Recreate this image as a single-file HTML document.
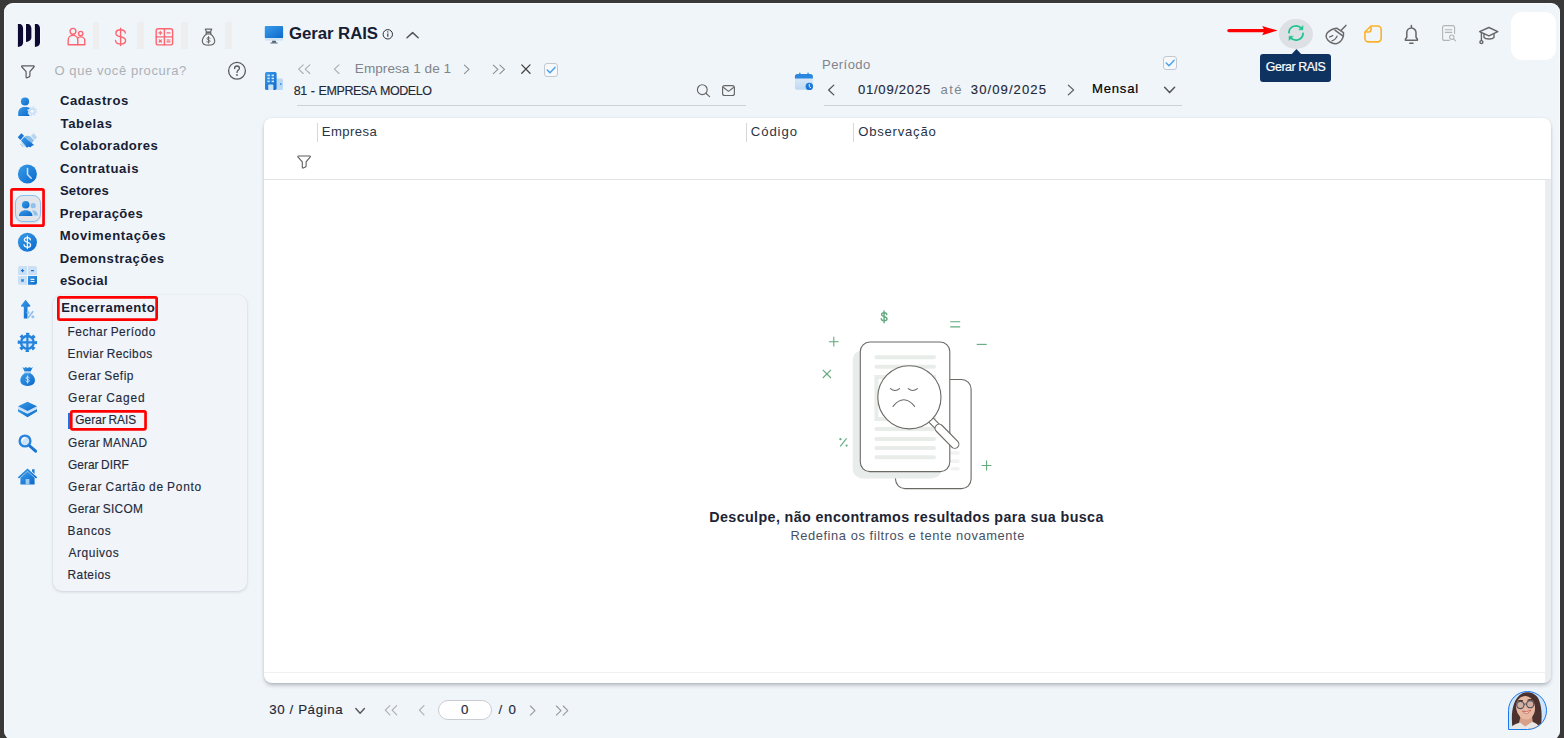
<!DOCTYPE html>
<html lang="pt-BR"><head><meta charset="utf-8"><title>Gerar RAIS</title>
<style>
*{box-sizing:border-box;margin:0;padding:0}
html,body{width:1564px;height:738px;overflow:hidden;background:#393939}
body{font-family:"Liberation Sans",sans-serif;position:relative}
#app{position:absolute;left:0;top:0;width:1564px;height:738px;overflow:hidden}
#win{position:absolute;left:4px;top:3px;width:1556px;height:737px;background:#f0f5fa;border-radius:9px;box-shadow:inset 0 0 0 1px rgba(255,255,255,.55)}
.t{position:absolute;white-space:pre;line-height:20px;height:20px;font-family:"Liberation Sans",sans-serif}
.abs{position:absolute}
svg{position:absolute;left:0;top:0;overflow:visible}
.sep{position:absolute;top:22px;height:27px;background:#eeeeee}
#panel{position:absolute;left:53px;top:294.5px;width:193.5px;height:296px;border-radius:9px;background:#f1f5fa;box-shadow:0 1px 3px rgba(60,80,110,.20),0 0 1px rgba(60,80,110,.08)}
#card{overflow:hidden;position:absolute;left:264px;top:118px;width:1287px;height:565px;background:#fff;border-radius:8px;box-shadow:0 3px 4px -1px rgba(30,35,45,.30),0 0 3px rgba(50,60,80,.10)}
.hl{position:absolute;height:1px;background:#cdd2d8}
.vsep{position:absolute;top:123px;height:19px;width:1px;background:#d4d7db}
.cb{position:absolute;width:14px;height:14px;border:1px solid #c3c8ce;border-radius:3px;background:#f6f8fb}

</style></head>
<body>
<div id="app">
<div id="win"></div>
<!-- top module separators -->
<div class="sep" style="left:93px;width:6px"></div>
<div class="sep" style="left:137px;width:7px"></div>
<div class="sep" style="left:181px;width:7px"></div>
<div class="sep" style="left:225px;width:7px"></div>
<div id="panel"></div>
<!-- selected module tile -->
<div class="abs" style="left:15px;top:194.5px;width:26px;height:27px;border-radius:8px;background:#e2e6ea;border:1px solid #8bc0ef;box-shadow:0 1px 2px rgba(0,0,0,.12)"></div>
<!-- card -->
<div id="card">
  <div class="abs" style="left:0;top:61px;width:1287px;height:1px;background:#e2e3e5"></div>
  <div class="abs" style="left:1281px;top:62px;width:6px;height:503px;background:#ecedf1"></div>
  <div class="abs" style="left:0;top:554px;width:1281px;height:1px;background:#f0f0f2"></div>
</div>
<div class="vsep" style="left:317px"></div>
<div class="vsep" style="left:746px"></div>
<div class="vsep" style="left:853px"></div>
<!-- underlines -->
<div class="hl" style="left:297px;top:105px;width:449px"></div>
<div class="hl" style="left:824px;top:105px;width:358px"></div>
<!-- checkboxes -->
<div class="cb" style="left:544px;top:63px"></div>
<div class="cb" style="left:1163px;top:56px"></div>
<!-- right white tile -->
<div class="abs" style="left:1511px;top:12px;width:45px;height:48px;border-radius:11px;background:#fff"></div>
<!-- toolbar hover circle -->
<div class="abs" style="left:1278.8px;top:18.8px;width:34.2px;height:30.2px;border-radius:50%;background:#dde1e6"></div>
<!-- tooltip -->
<div class="abs" style="left:1260px;top:54px;width:71px;height:28px;border-radius:3px;background:#0e3361"></div>
<!-- pagination input -->
<div class="abs" style="left:438px;top:700px;width:54px;height:20px;border-radius:10px;background:#fff;border:1px solid #c9cdd3"></div>
<!-- sub menu active bar -->
<div class="abs" style="left:68px;top:413px;width:2.2px;height:16px;background:#1a73e8"></div>
<!-- avatar -->
<div class="abs" id="avatar" style="left:1508px;top:691px;width:39px;height:39px;border-radius:50% 50% 50% 0;background:#cde6fd;border:1.5px solid #1a78ee;overflow:hidden">
<svg width="39" height="39" viewBox="0 0 39 39" style="left:-1.5px;top:-1.5px">
 <path d="M4.6 38 C2.8 25 3.6 8 14 2.4 C20 -0.2 28 1.8 31 9 C34 16 34 26 33.2 33 L27 38 Z" fill="#4c322e"/>
 <path d="M12.4 26 L24 25 L25 33 L17 37 L11 32 Z" fill="#d6a089"/>
 <ellipse cx="17.6" cy="16.6" rx="9.4" ry="12" transform="rotate(-8 17.6 16.6)" fill="#e6b8a2"/>
 <path d="M6.6 15 C7 6.5 15 2.6 21.6 3.8 C26.4 4.8 28.6 8.4 29.2 14 C27 8 22.4 4.8 17.4 5 C12.4 5.4 8.6 8.4 6.6 15 Z" fill="#4c322e"/>
 <path d="M26.6 7.4 C31 13 30.6 26 33.2 33 L28.6 35.6 C27.6 27 28.8 16 26.6 7.4 Z" fill="#4c322e"/>
 <path d="M6.8 13 C5.4 20 6.6 30 4.6 38 L9 36 C9.6 28 7.2 20 6.8 13 Z" fill="#4c322e"/>
 <path d="M1.4 39 C3.4 34.4 8 32.6 12 31.4 L17.2 35.6 L24.4 30.8 C27.6 31.8 29.8 33.6 31 35.6 L26 39 Z" fill="#e9e7e4"/>
 <circle cx="12.4" cy="14" r="3.6" fill="rgba(130,140,160,.18)" stroke="#4b505b" stroke-width="1.1"/>
 <circle cx="22.2" cy="13.2" r="3.6" fill="rgba(130,140,160,.18)" stroke="#4b505b" stroke-width="1.1"/>
 <path d="M16 13.4 Q17.4 12.6 18.6 13.2" fill="none" stroke="#4b505b" stroke-width="1"/>
 <path d="M9.4 10.2 Q12 8.8 15 9.8 M19.4 9.2 Q22.4 7.8 25.2 9" fill="none" stroke="#3a2622" stroke-width="1"/>
 <path d="M14.4 20.2 Q18.6 21.6 22.8 19.2 Q19.4 25 14.4 20.2 Z" fill="#fff" stroke="#c4544f" stroke-width=".8"/>
</svg>
</div>
<svg id="ico" width="1564" height="738" viewBox="0 0 1564 738">
<defs>
 <linearGradient id="gb" x1="0" y1="0" x2="1" y2="1"><stop offset="0" stop-color="#3a9ce8"/><stop offset="1" stop-color="#0b69cc"/></linearGradient>
 <linearGradient id="gl" x1="0" y1="0" x2="0" y2="1"><stop offset="0" stop-color="#e3eef9"/><stop offset="1" stop-color="#bfd8f2"/></linearGradient>
</defs>
<!-- logo -->
<g fill="#0c0a33" stroke="#fbfdff" stroke-width="1" paint-order="stroke">
 <path d="M17.9 23.9 H20.4 C22.2 24.6 23.1 26.4 23.1 28.6 V42.4 C23.1 45 21 46.6 17.9 47 Z"/>
 <path d="M26 23.9 H28.6 C30.4 24.6 31.4 26.4 31.4 28.6 V37.6 C31.4 40.2 29.2 41.7 26 42 Z"/>
 <path d="M34.9 23.9 H37.3 C39.1 24.6 40 26.4 40 28.6 V42.4 C40 45 38 46.6 34.9 47 Z"/>
</g>
<!-- top modules -->
<g fill="none" stroke="#fb6570" stroke-width="1.4" stroke-linejoin="round" stroke-linecap="round">
 <circle cx="73" cy="31.3" r="2.9"/>
 <path d="M68.2 44.7 V40.2 C68.2 37.4 70.3 35.3 73 35.3 C75.7 35.3 77.8 37.4 77.8 40.2 V44.7 Z"/>
 <circle cx="80.7" cy="33.6" r="2.2"/>
 <path d="M77.8 44.7 H84.8 V40.6 C84.8 38.5 83 36.9 80.7 36.9 C79.4 36.9 78.4 37.4 77.6 38.2"/>
 <!-- calc -->
 <rect x="156.2" y="28.8" width="16.4" height="16.1" rx="2"/>
 <path d="M164.4 28.8 V44.9 M156.2 36.9 H172.6"/>
 <path d="M160.3 31.4 V34.4 M158.8 32.9 H161.8 M167 32.9 H170 M159.2 39.8 L161.4 42 M161.4 39.8 L159.2 42 M167 40 H170 M167 41.9 H170" stroke-width="1.2"/>
</g>
<g fill="none" stroke="#fb6570" stroke-width="1.4" stroke-linecap="round">
 <path d="M125.3 33 C125 30.8 123.2 29.8 120.6 29.8 C117.8 29.8 115.9 31.1 115.9 33.2 C115.9 35.3 117.6 36.2 120.6 36.8 C123.8 37.5 125.6 38.4 125.6 40.6 C125.6 42.8 123.5 44.1 120.7 44.1 C117.8 44.1 115.8 42.9 115.5 40.5 M120.6 28.2 V45.6"/>
</g>
<!-- money bag gray -->
<g fill="none" stroke="#6a6a6a" stroke-width="1.2" stroke-linejoin="round" stroke-linecap="round">
 <path d="M205.3 29.2 H211.7 L210.3 32.2 H206.7 Z"/>
 <path d="M206.2 32.4 H210.8 V33.9 H206.2 Z"/>
 <path d="M206.5 34 C204 36 202.3 38.8 202.3 41.2 C202.3 43.9 204.6 45.2 208.5 45.2 C212.4 45.2 214.7 43.9 214.7 41.2 C214.7 38.8 213 36 210.5 34"/>
 <path d="M209.9 38.4 C209.7 37.7 209.2 37.4 208.5 37.4 C207.6 37.4 207 37.9 207 38.6 C207 40.2 210 39.4 210 41.1 C210 41.9 209.4 42.4 208.5 42.4 C207.7 42.4 207.1 42 206.9 41.3 M208.5 36.6 V43.2" stroke-width="1"/>
</g>
<!-- sidebar filter + help -->
<path d="M22.3 65.8 H33.5 Q34.7 66.0 33.9 67.0 L29.9 71.7 V75.7 Q29.8 76.5 29.1 76.9 L27.1 77.8 Q26.1 78.1 26.1 77.1 V71.7 L21.9 67.0 Q21.1 66.0 22.3 65.8 Z" fill="none" stroke="#5c5c5c" stroke-width="1.2" stroke-linejoin="round"/>
<circle cx="237" cy="70.8" r="8.4" fill="none" stroke="#5a5a5a" stroke-width="1.3"/>
<path d="M234.6 68.5 C234.6 66.9 235.6 66 237 66 C238.4 66 239.4 66.9 239.4 68.2 C239.4 70 237 70.2 237 72.4" fill="none" stroke="#5a5a5a" stroke-width="1.3" stroke-linecap="round"/>
<circle cx="237" cy="75" r=".9" fill="#5a5a5a"/>
<!-- left column icons -->
<!-- 1 person gear -->
<circle cx="25" cy="101.5" r="4.1" fill="url(#gb)"/>
<path d="M18.2 116 V113.2 C18.2 109.6 20.6 106.9 24.2 106.9 H26 C27.6 106.9 28.9 107.4 29.9 108.3 C28 109.8 27.6 113.2 29.9 116 Z" fill="url(#gb)"/>
<g fill="#cbe0f5"><circle cx="32.2" cy="111.2" r="3.4"/><circle cx="32.2" cy="111.2" r="4.1" fill="none" stroke="#cbe0f5" stroke-width="1.7" stroke-dasharray="1.61 1.61"/></g>
<circle cx="32.2" cy="111.2" r="1.5" fill="#f4f8fc"/>
<!-- 2 handshake -->
<path d="M17.8 137.3 L21.3 133.2 L24 135.8 L20.4 140 Z" fill="#1a74d2"/>
<path d="M37.1 137.3 L33.7 133.2 L31 135.8 L34.6 140 Z" fill="#b9d6f1"/>
<path d="M24.6 136.4 C26.6 135.4 28.8 135.6 30.4 136.6 L34 140.6 L31.6 143.2 L27.4 139.2 L24.4 140.6 Z" fill="#8bbcea"/>
<path d="M21 140.6 L24.2 137 L33.6 144.4 C33.8 145.4 33 146 32.2 145.6 L30.8 147 C30 147.6 29.2 147.2 28.8 146.6 L27.6 147.4 C26.6 147.6 26 147 25.8 146.4 Z" fill="url(#gb)"/>
<path d="M21.6 142.2 L25.4 146.4 M20.4 143.8 L23.4 146.8" stroke="#a9cdf0" stroke-width="1.1"/>
<!-- 3 clock -->
<circle cx="27.4" cy="174" r="9.5" fill="url(#gb)"/>
<path d="M27.5 168.6 V174.4 L31.2 178.2" fill="none" stroke="#cfe5fa" stroke-width="1.5" stroke-linecap="round" stroke-linejoin="round"/>
<!-- 4 selected people -->
<circle cx="25.7" cy="204.8" r="3.8" fill="url(#gb)"/>
<path d="M18.9 216 C18.9 212.6 21.6 210.3 25.7 210.3 C29.8 210.3 32.5 212.6 32.5 216 Z" fill="url(#gb)"/>
<circle cx="33.2" cy="205.7" r="2.6" fill="#8fc2ee"/>
<path d="M31.6 210.6 C35.4 210 37.9 212 37.9 215.4 H34 C33.8 213.4 33 211.8 31.6 210.6 Z" fill="#8fc2ee"/>
<rect x="11.45" y="189.45" width="32.1" height="36.2" rx="1.5" fill="none" stroke="#ff0000" stroke-width="2.7"/>
<!-- 5 dollar -->
<circle cx="27.4" cy="242.3" r="9.5" fill="url(#gb)"/>
<path d="M30.4 239.8 C30.2 238.3 29 237.5 27.3 237.5 C25.5 237.5 24.3 238.4 24.3 239.8 C24.3 243.2 30.6 241.3 30.6 244.9 C30.6 246.3 29.3 247.2 27.4 247.2 C25.5 247.2 24.2 246.3 24 244.7 M27.4 236.2 V248.5" fill="none" stroke="#f2f8fe" stroke-width="1.25" stroke-linecap="round"/>
<!-- 6 calc -->
<path d="M20 266.1 H27 V275 H18 V268.1 A2 2 0 0 1 20 266.1 Z" fill="#cbe0f5"/>
<path d="M28 266.1 H35 A2 2 0 0 1 37 268.1 V275 H28 Z" fill="#cbe0f5"/>
<path d="M18 276 H27 V284.8 H20 A2 2 0 0 1 18 282.8 Z" fill="#cbe0f5"/>
<path d="M28 276 H37 V282.8 A2 2 0 0 1 35 284.8 H28 Z" fill="url(#gb)"/>
<path d="M22.5 269 V272.2 M20.9 270.6 H24.1 M31 270.6 H34 M21.4 279.3 L23.6 281.5 M23.6 279.3 L21.4 281.5" stroke="#1a73d6" stroke-width="1.1" fill="none"/>
<path d="M30.6 279.4 H34.4 M30.6 281.5 H34.4" stroke="#e8f2fc" stroke-width="1.1"/>
<!-- 7 arrow up % -->
<path d="M25.6 299.7 L30.2 305.6 C30.5 306.3 30.2 306.8 29.5 306.8 H27.5 V318.4 H23.8 V306.8 H21.8 C21.1 306.8 20.8 306.3 21.1 305.6 Z" fill="url(#gb)"/>
<path d="M27.6 318.2 L33.2 311.2" stroke="#8fc2ee" stroke-width="1.7"/>
<circle cx="28" cy="312.6" r="1.5" fill="#8fc2ee"/><circle cx="32.8" cy="316.8" r="1.5" fill="#8fc2ee"/>
<!-- 8 gear plus -->
<circle cx="27.4" cy="342.4" r="6.4" fill="#d3e6f8" stroke="#2583dc" stroke-width="2.4"/>
<circle cx="27.4" cy="342.4" r="8.4" fill="none" stroke="#2583dc" stroke-width="2.6" stroke-dasharray="3.3 3.3" stroke-dashoffset="1.65"/>
<path d="M27.4 336 V348.8 M21 342.4 H33.8" stroke="#2583dc" stroke-width="2.2"/>
<!-- 9 money bag -->
<path d="M22.3 367 L24.2 368 L25.8 367 L27.6 368 L29.4 367 L31 368 L32.9 367 L30.6 371.4 H24.6 Z" fill="url(#gb)"/>
<rect x="24.4" y="371.4" width="6.4" height="1.8" fill="#a9cdf0"/>
<path d="M24.6 373.2 H30.6 C33.4 375 34.9 377.6 34.9 380.2 C34.9 383.8 32 385.9 27.6 385.9 C23.2 385.9 20.3 383.8 20.3 380.2 C20.3 377.6 21.8 375 24.6 373.2 Z" fill="url(#gb)"/>
<path d="M29.1 378 C29 377.2 28.4 376.8 27.6 376.8 C26.7 376.8 26.1 377.3 26.1 378 C26.1 379.8 29.2 378.9 29.2 380.8 C29.2 381.6 28.5 382.1 27.6 382.1 C26.7 382.1 26.1 381.6 26 380.8 M27.6 375.8 V383.1" fill="none" stroke="#d5e8fa" stroke-width=".9" stroke-linecap="round"/>
<!-- 10 layers -->
<path d="M18 409 L27.5 413.8 L37 409 V411.6 L27.5 417.3 L18 411.6 Z" fill="url(#gb)"/>
<path d="M18 406.5 L27.5 411.3 L37 406.5 V408.4 L27.5 413.2 L18 408.4 Z" fill="#cbe0f5"/>
<path d="M27.5 401.7 L37 406.3 L27.5 411 L18 406.3 Z" fill="url(#gb)"/>
<!-- 11 magnifier -->
<circle cx="25" cy="441" r="5.4" fill="#cfe3f6" stroke="#2583dc" stroke-width="2.3"/>
<path d="M22 440.6 C22.2 439 23.2 438 24.6 437.8" fill="none" stroke="#fff" stroke-width="1.2" stroke-linecap="round"/>
<path d="M29.8 446 L35.6 451.2" stroke="#1a74d2" stroke-width="3" stroke-linecap="round"/>
<!-- 12 home -->
<path d="M32 469.2 H34.6 V474 L32 471.6 Z" fill="#2b7fd2"/>
<path d="M27.5 468.5 L37.2 477.2 L36 478.5 L27.5 471 L19 478.5 L17.8 477.2 Z" fill="url(#gb)"/>
<path d="M20.4 477.8 L27.5 471.6 L34.6 477.8 V484.4 H20.4 Z" fill="url(#gb)"/>
<rect x="25.6" y="479" width="3.8" height="5.4" fill="#9ec8f0"/>
</svg>
<svg id="ico2" width="1564" height="738" viewBox="0 0 1564 738">
<!-- red boxes -->
<rect x="58.35" y="297.45" width="98.3" height="22.1" rx="1.5" fill="none" stroke="#ff0000" stroke-width="2.7"/>
<rect x="71.25" y="411.35" width="74.3" height="18" rx="1.5" fill="none" stroke="#ff0000" stroke-width="2.7"/>
<!-- monitor -->
<rect x="264.8" y="25.9" width="18.3" height="12.4" rx="1" fill="url(#gb)"/>
<path d="M264.8 38.1 H283.1 V39.8 A1 1 0 0 1 282.1 40.8 H265.8 A1 1 0 0 1 264.8 39.8 Z" fill="#d3e4f4"/>
<path d="M272.4 40.8 H275.6 L276.2 42.7 H271.8 Z" fill="#4a5a6c"/>
<rect x="270.2" y="42.6" width="7.6" height=".9" rx=".4" fill="#5e7185"/>
<!-- info -->
<circle cx="387.8" cy="34.3" r="4.7" fill="none" stroke="#2a2f3a" stroke-width="1"/>
<path d="M387.8 33.6 V36.8" stroke="#2a2f3a" stroke-width="1.1"/><circle cx="387.8" cy="31.9" r=".7" fill="#2a2f3a"/>
<!-- chevron up -->
<path d="M407 37.7 L412.6 32.6 L418.2 37.7" fill="none" stroke="#555" stroke-width="1.5" stroke-linecap="round" stroke-linejoin="round"/>
<!-- building -->
<path d="M276.5 78.4 H281.5 A1.5 1.5 0 0 1 283 79.9 V88.4 A1.5 1.5 0 0 1 281.5 89.9 H276.5 Z" fill="#bcd9f4"/>
<rect x="280.2" y="83" width="1.2" height="2.2" rx=".6" fill="#2a86df"/>
<rect x="265" y="72" width="11.6" height="17.9" rx="1.6" fill="url(#gb)"/>
<g fill="#d8e9f9"><rect x="267.4" y="74.6" width="2.4" height="1.6"/><rect x="271.6" y="74.6" width="2.4" height="1.6"/><rect x="267.4" y="77.6" width="2.4" height="1.6"/><rect x="271.6" y="77.6" width="2.4" height="1.6"/><rect x="267.4" y="80.6" width="2.4" height="1.6"/><rect x="271.6" y="80.6" width="2.4" height="1.6"/></g>
<path d="M268.2 89.9 V85.6 A1 1 0 0 1 269.2 84.6 H272.4 A1 1 0 0 1 273.4 85.6 V89.9 Z" fill="#cfe3f7"/>
<!-- company nav chevrons -->
<g fill="none" stroke="#aaadb1" stroke-width="1.1" stroke-linecap="round" stroke-linejoin="round">
 <path d="M303.2 64.9 L298.6 69.2 L303.2 73.5 M309.8 64.9 L305.2 69.2 L309.8 73.5"/>
 <path d="M339 64.9 L334.4 69.2 L339 73.5"/>
 <path d="M464.4 65.1 L469 69.4 L464.4 73.7" stroke="#8c8f93"/>
 <path d="M493.3 65.1 L497.9 69.4 L493.3 73.7 M499.9 65.1 L504.5 69.4 L499.9 73.7" stroke="#8c8f93"/>
</g>
<path d="M521.8 64.9 L530 73.3 M530 64.9 L521.8 73.3" stroke="#444" stroke-width="1.3" stroke-linecap="round"/>
<!-- checks -->
<path d="M547.2 70 L550 72.8 L555 67.4" fill="none" stroke="#4ba3ea" stroke-width="1.5" stroke-linecap="round" stroke-linejoin="round"/>
<path d="M1166.2 63 L1169 65.8 L1174 60.4" fill="none" stroke="#4ba3ea" stroke-width="1.5" stroke-linecap="round" stroke-linejoin="round"/>
<!-- search + mail -->
<circle cx="702.3" cy="89.7" r="4.9" fill="none" stroke="#666" stroke-width="1.15"/>
<path d="M705.9 93.3 L709.6 96.6" stroke="#666" stroke-width="1.15" stroke-linecap="round"/>
<rect x="722.6" y="85.6" width="11.8" height="9.9" rx="2" fill="none" stroke="#666" stroke-width="1.15"/>
<path d="M723.2 87.2 L728.5 91.4 L733.8 87.2" fill="none" stroke="#666" stroke-width="1.15" stroke-linejoin="round"/>
<!-- calendar -->
<rect x="799.2" y="72.4" width="1.3" height="3" rx=".6" fill="#2a86df"/><rect x="807.4" y="72.4" width="1.3" height="3" rx=".6" fill="#2a86df"/>
<rect x="794.9" y="74" width="18" height="15.8" rx="2.6" fill="url(#gl)"/>
<path d="M797.5 74 H810.3 A2.6 2.6 0 0 1 812.9 76.6 V78.6 H794.9 V76.6 A2.6 2.6 0 0 1 797.5 74 Z" fill="#2a86df"/>
<circle cx="809.3" cy="86.4" r="3.7" fill="#1a78d8"/>
<path d="M809.3 84.3 V86.6 L810.7 87.6" fill="none" stroke="#fff" stroke-width=".9" stroke-linecap="round"/>
<!-- period chevrons -->
<path d="M833.8 85.1 L828.6 90 L833.8 94.9" fill="none" stroke="#555" stroke-width="1.3" stroke-linecap="round" stroke-linejoin="round"/>
<path d="M1068.4 85.2 L1073.6 90 L1068.4 94.8" fill="none" stroke="#6a6a6a" stroke-width="1.3" stroke-linecap="round" stroke-linejoin="round"/>
<path d="M1164.6 87.2 L1169.6 92.6 L1174.6 87.2" fill="none" stroke="#555" stroke-width="1.5" stroke-linecap="round" stroke-linejoin="round"/>
<!-- table filter -->
<path d="M298.5 156.0 H309.7 Q310.9 156.2 310.1 157.2 L306.1 161.9 V165.9 Q306.0 166.7 305.3 167.1 L303.3 168.0 Q302.3 168.3 302.3 167.3 V161.9 L298.1 157.2 Q297.3 156.2 298.5 156.0 Z" fill="none" stroke="#5c5c5c" stroke-width="1.1" stroke-linejoin="round"/>
<!-- red arrow -->
<path d="M1229 30.6 H1266" stroke="#ff0000" stroke-width="3.4" stroke-linecap="round"/>
<path d="M1277.6 30.6 L1262.2 26 L1264.6 30.6 L1262.2 35.2 Z" fill="#ff0000"/>
<!-- refresh -->
<g fill="none" stroke="#1fc48c" stroke-width="1.8" stroke-linecap="round">
 <path d="M1288.9 32.6 A7.1 7.1 0 0 1 1301.4 28.4"/>
 <path d="M1303.1 33.4 A7.1 7.1 0 0 1 1290.6 37.6"/>
</g>
<path d="M1303 25.6 V29.8 H1298.8 Z" fill="#1fc48c" stroke="#1fc48c" stroke-width=".5" stroke-linejoin="round"/>
<path d="M1289 40.4 V36.2 H1293.2 Z" fill="#1fc48c" stroke="#1fc48c" stroke-width=".5" stroke-linejoin="round"/>
<!-- tooltip arrow -->
<path d="M1291.6 54.2 L1296.4 49 L1301.4 54.2 Z" fill="#0e3361"/>
<!-- broom -->
<g fill="none" stroke="#6a6a6a" stroke-width="1.5" stroke-linecap="round" stroke-linejoin="round">
 <path d="M1345.9 25.4 L1341 30.4"/>
 <path d="M1336.7 28.2 C1333.5 28.6 1329.4 30.6 1327.4 32.8 C1325.6 35.2 1326 38 1327.8 40 C1329.8 42.2 1333 43.8 1336.2 43.7 C1339.4 43 1341.8 40.4 1342.8 37.8 C1343.4 36.4 1343.6 34.6 1343.5 32.7 Z"/>
 <path d="M1334.9 30.2 L1342.4 35.6"/>
 <path d="M1329.6 36.8 C1330.8 36.6 1331.8 36.2 1332.7 35.4 M1332 40.8 C1334.6 39.8 1336.4 38.2 1337.1 36.1" stroke-width="1.3"/>
</g>
<!-- note -->
<g fill="none" stroke="#fcb12c" stroke-width="1.6" stroke-linejoin="round">
 <path d="M1371 26 H1377.6 A3.6 3.6 0 0 1 1381.2 29.6 V38.3 A3.6 3.6 0 0 1 1377.6 41.9 H1368.5 A3.6 3.6 0 0 1 1364.9 38.3 V32 Z"/>
 <path d="M1371 26.4 V29.8 A2.2 2.2 0 0 1 1368.8 32 H1365.3"/>
</g>
<!-- bell -->
<g fill="none" stroke="#666" stroke-width="1.5" stroke-linecap="round" stroke-linejoin="round">
 <path d="M1411.4 25.6 V27.2"/>
 <path d="M1406.8 37.2 V32.6 A4.6 4.6 0 0 1 1416 32.6 V37.2 L1417.4 39.2 V40.2 H1405.4 V39.2 Z"/>
 <path d="M1409.8 43.2 H1413"/>
</g>
<!-- doc search -->
<g fill="none" stroke="#b4b4b4" stroke-width="1.1" stroke-linecap="round" stroke-linejoin="round">
 <path d="M1449.4 40.4 H1444.6 A2 2 0 0 1 1442.6 38.4 V27.6 A2 2 0 0 1 1444.6 25.6 H1452.6 A2 2 0 0 1 1454.6 27.6 V33.4"/>
 <path d="M1445.4 29.8 H1451.8 M1445.4 32.4 H1451.8"/>
 <circle cx="1451.8" cy="37.2" r="2.2"/><path d="M1453.6 39 L1455.6 40.8"/>
</g>
<!-- grad cap -->
<g fill="none" stroke="#666" stroke-width="1.4" stroke-linecap="round" stroke-linejoin="round">
 <path d="M1479.6 31.6 L1488.9 27.5 L1497.8 31.6 L1488.9 35.8 Z"/>
 <path d="M1484 33.8 V37.4 C1485.4 39.6 1492.6 39.6 1494 37.4 V33.8"/>
 <path d="M1481.4 32.6 V40.4"/><circle cx="1481.4" cy="42.1" r="1.5"/>
</g>
<!-- pagination chevrons -->
<path d="M355.8 708.6 L360.1 713.2 L364.4 708.6" fill="none" stroke="#555" stroke-width="1.4" stroke-linecap="round" stroke-linejoin="round"/>
<g fill="none" stroke="#aaadb1" stroke-width="1.1" stroke-linecap="round" stroke-linejoin="round">
 <path d="M389.9 705.6 L385.3 710.2 L389.9 714.8 M396.7 705.6 L392.1 710.2 L396.7 714.8"/>
 <path d="M424 705.6 L419.4 710.2 L424 714.8"/>
 <path d="M530.4 706 L535 710.6 L530.4 715.2" stroke="#999"/>
 <path d="M556.4 706 L561 710.6 L556.4 715.2 M563.2 706 L567.8 710.6 L563.2 715.2" stroke="#999"/>
</g>
</svg>
<svg id="ill" width="1564" height="738" viewBox="0 0 1564 738">
<!-- back doc -->
<path d="M949 379.5 H961.6 A9.5 9.5 0 0 1 971.1 389 V479.1 A9.5 9.5 0 0 1 961.6 488.6 H905 A9.5 9.5 0 0 1 895.5 479.1 V470" fill="#fff" stroke="#6b6964" stroke-width="1.1"/>
<g stroke="#f1f2f1" stroke-width="3.6" stroke-linecap="round"><path d="M952 453 H958 M952 461.2 H958 M952 468.8 H958"/></g>
<!-- shadow -->
<path d="M852.7 360 A9.5 9.5 0 0 1 862.2 350.5 H931 V478.4 H862.2 A9.5 9.5 0 0 1 852.7 468.9 Z" fill="#e8ecea"/>
<path d="M931 471 H941 C941 475 937 478.4 931 478.4 Z" fill="#e8ecea"/>
<!-- front doc -->
<rect x="860.3" y="342" width="89.5" height="129.6" rx="9.5" fill="#fff" stroke="#6b6964" stroke-width="1.1"/>
<g stroke="#e8edea" stroke-width="4" stroke-linecap="round">
 <path d="M876.4 357.2 H934 M876.4 366.8 H934 M876.4 428.9 H934 M876.4 439 H934 M876.4 447.9 H934 M876.4 457.2 H934"/>
</g>
<rect x="876.4" y="377" width="57.6" height="42" fill="none" stroke="#e8edea" stroke-width="4"/>
<!-- magnifier handle -->
<g transform="translate(930.6 419.6) rotate(45.5)">
 <rect x="0" y="-3" width="12" height="6" fill="#fff" stroke="#6b6964" stroke-width="1.1"/>
 <rect x="8.2" y="-4.1" width="30.4" height="8.2" rx="4.1" fill="#fff" stroke="#6b6964" stroke-width="1.1"/>
</g>
<circle cx="909.4" cy="397.3" r="31.6" fill="#fff" stroke="#6b6964" stroke-width="1.1"/>
<!-- face -->
<g fill="none" stroke="#6b6964" stroke-width="1.1" stroke-linecap="round">
 <path d="M890.4 388.6 Q895 392.4 899.6 388.6"/><path d="M908.2 388.6 Q912.8 392.4 917.4 388.6"/>
 <path d="M893 406.4 Q903.8 393.2 914.6 406.4"/>
</g>
<!-- decorations -->
<g fill="none" stroke="#62a97d" stroke-width="1.1">
 <path d="M833.8 336.8 V346.6 M828.9 341.7 H838.7"/>
 <path d="M822.8 369.8 L831 378 M831 369.8 L822.8 378"/>
 <path d="M950.2 321.8 H960.2 M950.2 326.9 H960.2"/>
 <path d="M976.7 344.4 H986.8"/>
 <path d="M986.6 460.6 V470.4 M981.7 465.5 H991.5"/>
 <path d="M840.2 446.4 L846.6 438.4"/>
</g>
<circle cx="840.4" cy="439.2" r="1.1" fill="#62a97d"/><circle cx="846.6" cy="445.6" r="1.1" fill="#62a97d"/>
<path d="M886.8 314.6 C886.6 313.4 885.6 312.8 884.1 312.8 C882.6 312.8 881.6 313.5 881.6 314.7 C881.6 317.4 887 315.9 887 318.8 C887 320 885.9 320.8 884.2 320.8 C882.5 320.8 881.4 320 881.2 318.7 M884.1 311 V322.8" fill="none" stroke="#62a97d" stroke-width="1.4" stroke-linecap="round"/>
</svg>

<nav>
<span class="t" style="left:54.50px;top:61px;font-size:13px;font-weight:400;color:#adb1b6;letter-spacing:0.572px;">O que você procura?</span>
<span class="t" style="left:60.00px;top:91px;font-size:13.1px;font-weight:700;color:#172033;letter-spacing:0.525px;">Cadastros</span>
<span class="t" style="left:60.50px;top:114px;font-size:13.1px;font-weight:700;color:#172033;letter-spacing:0.617px;">Tabelas</span>
<span class="t" style="left:60.00px;top:136px;font-size:13.1px;font-weight:700;color:#172033;letter-spacing:0.454px;">Colaboradores</span>
<span class="t" style="left:60.00px;top:159px;font-size:13.1px;font-weight:700;color:#172033;letter-spacing:0.570px;">Contratuais</span>
<span class="t" style="left:60.00px;top:181px;font-size:13.1px;font-weight:700;color:#172033;letter-spacing:0.117px;">Setores</span>
<span class="t" style="left:59.75px;top:204px;font-size:13.1px;font-weight:700;color:#172033;letter-spacing:0.445px;">Preparações</span>
<span class="t" style="left:59.75px;top:226px;font-size:13.1px;font-weight:700;color:#172033;letter-spacing:0.621px;">Movimentações</span>
<span class="t" style="left:59.75px;top:249px;font-size:13.1px;font-weight:700;color:#172033;letter-spacing:0.496px;">Demonstrações</span>
<span class="t" style="left:60.00px;top:271px;font-size:13.1px;font-weight:700;color:#172033;letter-spacing:0.283px;">eSocial</span>
<span class="t" style="left:61.15px;top:298px;font-size:13.1px;font-weight:700;color:#172033;letter-spacing:0.495px;">Encerramento</span>
<span class="t" style="left:67.60px;top:322px;font-size:11.9px;font-weight:400;color:#1f2a3c;letter-spacing:0.508px;word-spacing:-0.8px;-webkit-text-stroke:.15px #1f2a3c;">Fechar Período</span>
<span class="t" style="left:67.60px;top:344px;font-size:11.9px;font-weight:400;color:#1f2a3c;letter-spacing:0.412px;word-spacing:-0.8px;-webkit-text-stroke:.15px #1f2a3c;">Enviar Recibos</span>
<span class="t" style="left:68.10px;top:366px;font-size:11.9px;font-weight:400;color:#1f2a3c;letter-spacing:0.535px;word-spacing:-0.8px;-webkit-text-stroke:.15px #1f2a3c;">Gerar Sefip</span>
<span class="t" style="left:68.10px;top:388px;font-size:11.9px;font-weight:400;color:#1f2a3c;letter-spacing:0.860px;word-spacing:-0.8px;-webkit-text-stroke:.15px #1f2a3c;">Gerar Caged</span>
<span class="t" style="left:75.30px;top:410px;font-size:11.9px;font-weight:400;color:#1f2a3c;letter-spacing:0.039px;word-spacing:-0.8px;-webkit-text-stroke:.15px #1f2a3c;">Gerar RAIS</span>
<span class="t" style="left:68.10px;top:433px;font-size:11.9px;font-weight:400;color:#1f2a3c;letter-spacing:0.310px;word-spacing:-0.8px;-webkit-text-stroke:.15px #1f2a3c;">Gerar MANAD</span>
<span class="t" style="left:68.10px;top:455px;font-size:11.9px;font-weight:400;color:#1f2a3c;letter-spacing:0.011px;word-spacing:-0.8px;-webkit-text-stroke:.15px #1f2a3c;">Gerar DIRF</span>
<span class="t" style="left:68.10px;top:477px;font-size:11.9px;font-weight:400;color:#1f2a3c;letter-spacing:0.760px;word-spacing:-0.8px;-webkit-text-stroke:.15px #1f2a3c;">Gerar Cartão de Ponto</span>
<span class="t" style="left:68.10px;top:499px;font-size:11.9px;font-weight:400;color:#1f2a3c;letter-spacing:0.285px;word-spacing:-0.8px;-webkit-text-stroke:.15px #1f2a3c;">Gerar SICOM</span>
<span class="t" style="left:67.60px;top:521px;font-size:11.9px;font-weight:400;color:#1f2a3c;letter-spacing:0.710px;word-spacing:-0.8px;-webkit-text-stroke:.15px #1f2a3c;">Bancos</span>
<span class="t" style="left:68.60px;top:543px;font-size:11.9px;font-weight:400;color:#1f2a3c;letter-spacing:0.543px;word-spacing:-0.8px;-webkit-text-stroke:.15px #1f2a3c;">Arquivos</span>
<span class="t" style="left:67.60px;top:565px;font-size:11.9px;font-weight:400;color:#1f2a3c;letter-spacing:0.425px;word-spacing:-0.8px;-webkit-text-stroke:.15px #1f2a3c;">Rateios</span>
</nav>
<header>
<span class="t" style="left:289.05px;top:24px;font-size:16.8px;font-weight:700;color:#172033;letter-spacing:-0.061px;">Gerar RAIS</span>
<span class="t" style="left:354.80px;top:59px;font-size:13.6px;font-weight:400;color:#808489;letter-spacing:0.027px;">Empresa 1 de 1</span>
<span class="t" style="left:293.80px;top:81px;font-size:12.5px;font-weight:400;color:#1f2838;letter-spacing:-0.439px;word-spacing:1.0px;-webkit-text-stroke:.15px #1f2838;">81 - EMPRESA MODELO</span>
<span class="t" style="left:822.00px;top:55px;font-size:13.1px;font-weight:400;color:#808489;letter-spacing:0.408px;">Período</span>
<span class="t" style="left:857.90px;top:80px;font-size:13.1px;font-weight:400;color:#1f2838;letter-spacing:0.756px;-webkit-text-stroke:.15px #1f2838;">01/09/2025</span>
<span class="t" style="left:940.50px;top:80px;font-size:13.1px;font-weight:400;color:#808489;letter-spacing:1.375px;">até</span>
<span class="t" style="left:970.80px;top:80px;font-size:13.1px;font-weight:400;color:#1f2838;letter-spacing:1.067px;-webkit-text-stroke:.15px #1f2838;">30/09/2025</span>
<span class="t" style="left:1092.10px;top:79px;font-size:13.1px;font-weight:400;color:#000;letter-spacing:0.760px;-webkit-text-stroke:.2px #000;">Mensal</span>
<span class="t" style="left:1265.80px;top:57px;font-size:12.4px;font-weight:400;color:#fff;letter-spacing:-0.444px;-webkit-text-stroke:.2px #fff;">Gerar RAIS</span>
</header>
<main>
<span class="t" style="left:321.70px;top:122px;font-size:13.1px;font-weight:400;color:#2a3446;letter-spacing:0.467px;">Empresa</span>
<span class="t" style="left:750.75px;top:122px;font-size:13.1px;font-weight:400;color:#2a3446;letter-spacing:0.950px;">Código</span>
<span class="t" style="left:858.30px;top:122px;font-size:13.1px;font-weight:400;color:#2a3446;letter-spacing:0.756px;">Observação</span>
<span class="t" style="left:709.30px;top:507px;font-size:14.3px;font-weight:700;color:#1c2434;letter-spacing:0.381px;">Desculpe, não encontramos resultados para sua busca</span>
<span class="t" style="left:790.40px;top:526px;font-size:12.9px;font-weight:400;color:#465063;letter-spacing:0.567px;">Redefina os filtros e tente novamente</span>
</main>
<footer>
<span class="t" style="left:269.20px;top:700px;font-size:13.3px;font-weight:400;color:#1f2838;letter-spacing:0.615px;-webkit-text-stroke:.15px #1f2838;">30 / Página</span>
<span class="t" style="left:461.10px;top:700px;font-size:13.3px;font-weight:400;color:#1f2838;letter-spacing:0.000px;-webkit-text-stroke:.15px #1f2838;">0</span>
<span class="t" style="left:498.60px;top:700px;font-size:13.3px;font-weight:400;color:#1f2838;letter-spacing:1.225px;-webkit-text-stroke:.15px #1f2838;">/ 0</span>
</footer>
</div>
</body></html>
